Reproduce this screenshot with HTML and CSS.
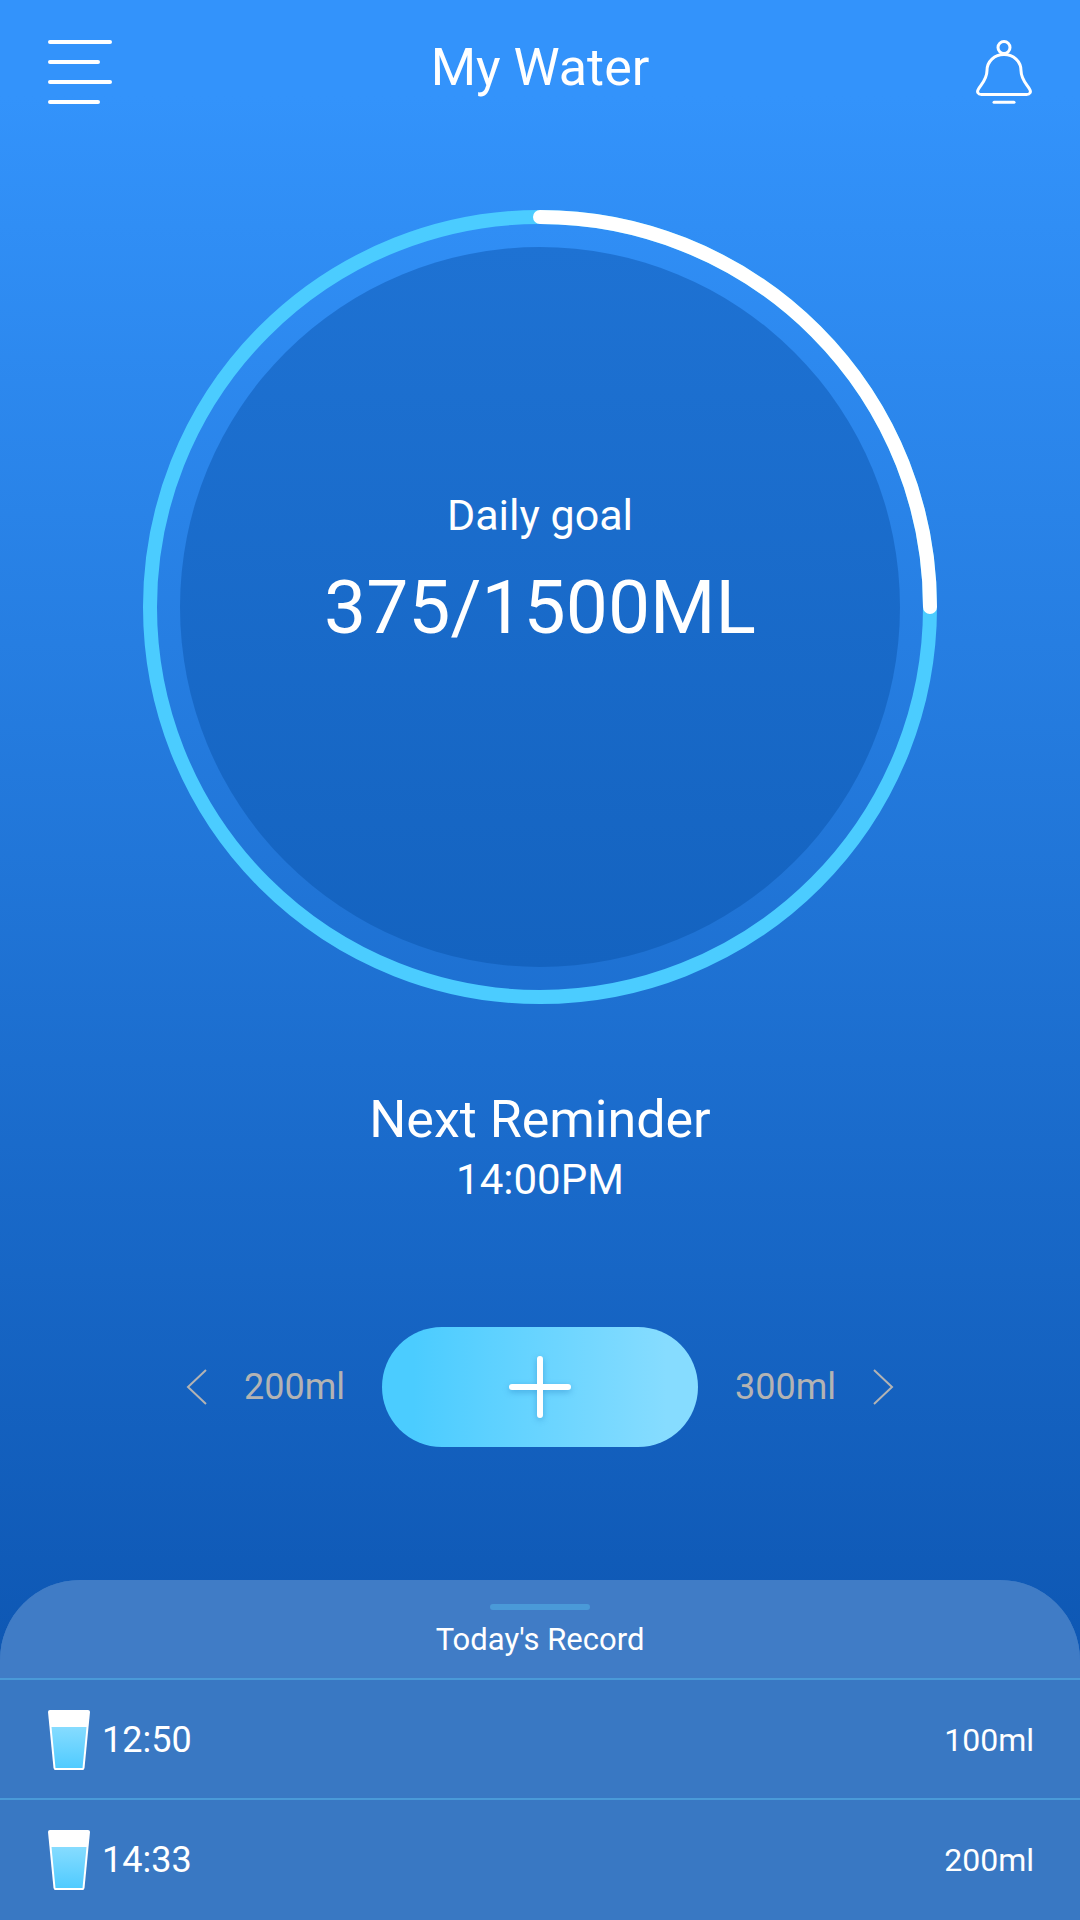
FILE: index.html
```html
<!DOCTYPE html>
<html lang="en">

<head>
    <meta charset="utf-8">
    <meta name="viewport" content="width=device-width, initial-scale=1.0">
    <title>My Water</title>
    <link rel="stylesheet" href="styles.css">
</head>

<body>
    <header class="top-bar">
        <button class="icon-btn" type="button" aria-label="Menu">
            <svg width="64" height="64" viewBox="0 0 64 64" fill="#fff">
                <rect x="0" y="0" width="64" height="4" rx="2" />
                <rect x="0" y="20" width="52" height="4" rx="2" />
                <rect x="0" y="40" width="64" height="4" rx="2" />
                <rect x="0" y="60" width="52" height="4" rx="2" />
            </svg>
        </button>
        <h1>My Water</h1>
        <button class="icon-btn" type="button" aria-label="Notifications">
            <svg width="56" height="64" viewBox="0 0 56 64" fill="none" stroke="#fff" stroke-width="3"
                stroke-linecap="round" stroke-linejoin="round">
                <circle cx="28" cy="7.5" r="6" />
                <path d="M28 14.5C18.500 14.5 11 21.500 11 30.500C11 39 6 43.500 2.500 49C0.500 52 2 54.500 5.500 54.500H50.500C54 54.500 55.500 52 53.500 49C50 43.500 45 39 45 30.500C45 21.500 37.500 14.500 28 14.500Z" />
                <path d="M18 62.300H38" />
            </svg>
        </button>
    </header>

    <main>
        <section class="gauge">
            <svg class="ring" viewBox="0 0 794 794" fill="none">
                <defs>
                    <linearGradient id="disc" x1="0" y1="0" x2="0" y2="1">
                        <stop offset="0" stop-color="#1e72d3" />
                        <stop offset="1" stop-color="#1463c0" />
                    </linearGradient>
                </defs>
                <circle cx="397" cy="397" r="360" fill="url(#disc)" />
                <circle cx="397" cy="397" r="390" stroke="#4bccff" stroke-width="14" />
                <!-- 375 of 1500 = a quarter turn -->
                <path d="M397 7A390 390 0 0 1 787 397" stroke="#fff" stroke-width="14" stroke-linecap="round" />
            </svg>
            <div class="goal">
                <h2>Daily goal</h2>
                <p>375/1500ML</p>
            </div>
        </section>

        <section class="reminder">
            <h2>Next Reminder</h2>
            <p>14:00PM</p>
        </section>

        <section class="picker">
            <button class="step" type="button">
                <svg width="22" height="38" viewBox="0 0 22 38">
                    <path d="M20 2L2 19L20 36" />
                </svg>
                200ml
            </button>
            <button class="add" type="button" aria-label="Add water">
                <svg width="64" height="64" viewBox="0 0 64 64">
                    <path d="M32 4V60M4 32H60" />
                </svg>
            </button>
            <button class="step" type="button">
                300ml
                <svg width="22" height="38" viewBox="0 0 22 38">
                    <path d="M2 2L20 19L2 36" />
                </svg>
            </button>
        </section>
    </main>

    <section class="record">
        <div class="record-head">
            <span class="handle"></span>
            <h2>Today's Record</h2>
        </div>
        <ul>
            <li>
                <svg width="42" height="60" viewBox="0 0 42 60">
                    <defs>
                        <linearGradient id="water" x1="0" y1="0" x2="0" y2="1">
                            <stop offset="0" stop-color="#86dcff" />
                            <stop offset="1" stop-color="#50cbff" />
                        </linearGradient>
                    </defs>
                    <path d="M2 0H40Q42 0 42 2L36.500 58Q36 60 35 60H7Q6 60 5.500 58L0 2Q0 0 2 0Z" fill="#fff" />
                    <path d="M3.500 17H38.500L34.500 58H7.500Z" fill="url(#water)" />
                </svg>
                <time>12:50</time>
                <span class="amount">100ml</span>
            </li>
            <li>
                <svg width="42" height="60" viewBox="0 0 42 60">
                    <path d="M2 0H40Q42 0 42 2L36.500 58Q36 60 35 60H7Q6 60 5.500 58L0 2Q0 0 2 0Z" fill="#fff" />
                    <path d="M3.500 17H38.500L34.500 58H7.500Z" fill="url(#water)" />
                </svg>
                <time>14:33</time>
                <span class="amount">200ml</span>
            </li>
        </ul>
    </section>
</body>

</html>
```
FILE: styles.css
```css
/* vars */
:root {
    --bg-top: #3393fb;
    --bg-bottom: #0d56b2;
    --accent: #4bccff;
    --accent-light: #86dcff;
    --muted: #b3b3b3;
    --line: #4a9ad8;
}

* {
    box-sizing: border-box;
}

body {
    margin: 0;
    min-height: 100vh;
    display: flex;
    flex-direction: column;
    background: linear-gradient(var(--bg-top) 5%, var(--bg-bottom) 88%);
    color: white;
    font-family: Roboto, sans-serif;
}

h1,
h2,
p,
ul {
    margin: 0;
    padding: 0;
    font-weight: 400;
}

button {
    border: none;
    padding: 0;
    background: none;
    font-family: inherit;
    cursor: pointer;
}

svg {
    display: block;
}

/* header */
.top-bar {
    display: flex;
    justify-content: space-between;
    padding: 40px 48px 0;
}

.top-bar h1 {
    font-size: 52px;
    line-height: 56px;
}

.icon-btn {
    width: 64px;
    height: 64px;
    display: flex;
}

.icon-btn:last-child {
    justify-content: flex-end;
}

/* daily goal */
main {
    display: flex;
    flex-direction: column;
    align-items: center;
    padding: 106px 24px 120px;
}

.gauge {
    display: grid;
    width: 100%;
    max-width: 794px;
}

.ring,
.goal {
    grid-area: 1 / 1;
}

.ring {
    width: 100%;
}

.goal {
    align-self: center;
    padding-bottom: 82px;
    text-align: center;
}

.goal h2 {
    font-size: 43px;
    line-height: 60px;
}

.goal p {
    margin-top: 22px;
    font-size: 75px;
    line-height: 80px;
}

/* reminder */
.reminder {
    margin-top: 84px;
    text-align: center;
}

.reminder h2 {
    font-size: 52px;
    line-height: 64px;
}

.reminder p {
    font-size: 42px;
    line-height: 56px;
}

/* amount picker */
.picker {
    display: flex;
    align-items: center;
    justify-content: center;
    gap: 37px;
    margin-top: 119px;
}

.step {
    display: flex;
    align-items: center;
    gap: 36px;
    color: var(--muted);
    font-size: 36px;
    line-height: 48px;
}

.step path {
    fill: none;
    stroke: var(--muted);
    stroke-width: 2;
}

.add {
    display: flex;
    align-items: center;
    justify-content: center;
    width: 316px;
    height: 120px;
    border-radius: 60px;
    background: linear-gradient(90deg, var(--accent) 10%, var(--accent-light) 90%);
}

.add svg {
    filter: drop-shadow(0 2px 3px rgba(0, 80, 160, 0.3));
}

.add path {
    fill: none;
    stroke: white;
    stroke-width: 6;
    stroke-linecap: round;
}

/* today's record */
.record {
    margin-top: auto;
    padding-bottom: 2px;
    overflow: hidden;
    border-radius: 80px 80px 0 0;
    background-color: #3978c3;
}

.record-head {
    display: flex;
    flex-direction: column;
    align-items: center;
    gap: 10px;
    padding: 24px 0 18px;
    background-color: #407cc6;
}

.handle {
    width: 100px;
    height: 6px;
    border-radius: 3px;
    background-color: var(--line);
}

.record h2 {
    font-size: 31px;
    line-height: 40px;
}

.record ul {
    list-style-type: none;
}

.record li {
    display: flex;
    align-items: center;
    gap: 12px;
    height: 120px;
    padding: 2px 46px 0 48px;
    border-top: 2px solid var(--line);
}

.record time {
    font-size: 36px;
    line-height: 48px;
}

.amount {
    margin-left: auto;
    font-size: 32px;
    line-height: 40px;
}
```
